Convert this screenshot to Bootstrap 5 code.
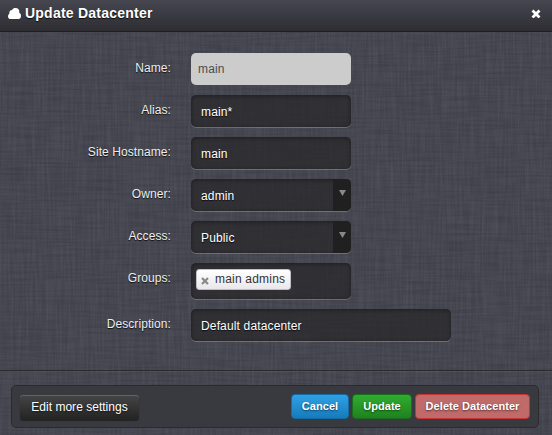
<!DOCTYPE html>
<html lang="en">
<head>
<meta charset="utf-8">
<title>Update Datacenter</title>
<link href="https://cdn.jsdelivr.net/npm/bootstrap@5.3.0/dist/css/bootstrap.min.css" rel="stylesheet">
<style>
body{width:552px;height:435px;overflow:hidden;font:12px/18px "Liberation Sans",Arial,sans-serif;letter-spacing:.15px;color:#eee;text-shadow:0 1px 1px rgba(0,0,0,.8);
background-color:#454650;
background-image:url("data:image/svg+xml,%3Csvg xmlns='http://www.w3.org/2000/svg' width='552' height='435'%3E%3Cfilter id='v' x='0' y='0' width='1' height='1'%3E%3CfeTurbulence type='fractalNoise' baseFrequency='.45 .025' numOctaves='2' seed='3'/%3E%3CfeColorMatrix values='0 0 0 0 1 0 0 0 0 1 0 0 0 0 1 .1 0 0 0 -.035'/%3E%3C/filter%3E%3Cfilter id='h' x='0' y='0' width='1' height='1'%3E%3CfeTurbulence type='fractalNoise' baseFrequency='.025 .45' numOctaves='2' seed='8'/%3E%3CfeColorMatrix values='0 0 0 0 0 0 0 0 0 0 0 0 0 0 0 .22 0 0 0 -.08'/%3E%3C/filter%3E%3Crect width='552' height='435' filter='url(%23v)'/%3E%3Crect width='552' height='435' filter='url(%23h)'/%3E%3C/svg%3E")}
.dlg-head{height:32px;padding:0 11px 5px 8px;background:linear-gradient(#464650,#2d2d32);border-bottom:1px solid #1f1f23}
.dlg-title{font-size:14px;font-weight:700;line-height:18px;color:#fff;letter-spacing:.23px}
.dlg-body{height:338px;padding-top:21px}
.rows{gap:10px}
.line{min-height:32px;gap:20px}
.line>label{width:171px;line-height:31px;text-align:right;letter-spacing:.08px}
.field{width:160px;height:32px;border-radius:5px;background:rgba(40,39,42,.72);box-shadow:inset 0 1px 4px rgba(0,0,0,.4),0 1px 0 rgba(255,255,255,.22);padding:1px 0 0 10px;color:#fff;overflow:hidden}
.field.off{background:#ccc;color:#4c4c4c;text-shadow:none;box-shadow:none;padding:0 0 1px 7px}
.field.wide{width:260px}
.field.tags{height:36px;padding:0 0 4px 5px}
.arrow{width:18px;height:32px;margin-top:-1px;background:#202021;padding:11px 0 0 6px}
.chip{height:21px;width:95px;padding:0 0 0 4px;border:1px solid #c2bec4;border-radius:3px;background:linear-gradient(#fff,#e9e7ea);color:#333;text-shadow:none;letter-spacing:.2px}
.chip svg{margin:4px 6px 0 0}
.dlg-foot{border-top:1px solid #2a2a2e;box-shadow:inset 0 1px 0 rgba(255,255,255,.05);height:65px;padding:14px 13px 0 11px}
.bar{height:43px;border:1px solid #2b2b2f;border-radius:5px;background:#393a3f;padding:0 8px 0 8px}
.bar .btn{font:700 11px/16px "Liberation Sans",Arial,sans-serif;height:25px;padding:0 0 2px;border-radius:4px;color:#fff;text-shadow:0 1px 2px rgba(0,0,0,.55);white-space:nowrap;letter-spacing:.05px}
.bar .b-edit{width:119px;font-weight:400;font-size:12px;padding:0;border:0;border-radius:3px;background:linear-gradient(#454545,#232323);box-shadow:inset 0 1px 0 #626262,0 1px 1px #222;margin-top:1px;letter-spacing:.02px}
.bar .b-cancel{width:58px;background:linear-gradient(#2fa1e5,#167bbb);border-color:#146ca5}
.bar .b-update{width:60px;background:linear-gradient(#2fad2f,#1f821f);border-color:#1b6d1e}
.bar .b-delete{width:115px;background:#c06a6a;border-color:#c43535}
.acts{gap:3px}
</style>
</head>
<body>
<header class="dlg-head d-flex align-items-center justify-content-between">
  <div class="d-flex align-items-center">
    <svg width="13" height="11" viewBox="0 0 13 11" fill="#fff"><path d="M2.500 11C1 11 0 9.800 0 8.400C0 7 .8 6 1.400 5.400C1 3.600 2.200 2 4.200 2C4.700.6 5.900 0 7.600 0C9.800 0 11.500 1.500 11.300 3.800L11.200 4.800C12.400 5.300 13 6.400 13 7.900C13 9.700 12 11 10.500 11Z"/></svg>
    <span class="dlg-title ms-1">Update Datacenter</span>
  </div>
  <svg width="10" height="10" viewBox="0 0 10 10" class="mt-1 mb-1" stroke="#fff" stroke-width="2.800"><path d="M1.500 2.500L8.500 9.500M8.500 2.500L1.500 9.500"/></svg>
</header>
<main class="dlg-body d-flex flex-column">
  <div class="rows d-flex flex-column">
    <div class="line d-flex"><label>Name:</label><div class="field off d-flex align-items-center">main</div></div>
    <div class="line d-flex"><label>Alias:</label><div class="field d-flex align-items-center">main*</div></div>
    <div class="line d-flex"><label>Site Hostname:</label><div class="field d-flex align-items-center">main</div></div>
    <div class="line d-flex"><label>Owner:</label><div class="field d-flex align-items-center justify-content-between">admin<span class="arrow d-flex align-items-start"><svg width="7" height="6" viewBox="0 0 7 6"><path d="M0 0H7L3.500 6Z" fill="#888"/></svg></span></div></div>
    <div class="line d-flex"><label>Access:</label><div class="field d-flex align-items-center justify-content-between">Public<span class="arrow d-flex align-items-start"><svg width="7" height="6" viewBox="0 0 7 6"><path d="M0 0H7L3.500 6Z" fill="#888"/></svg></span></div></div>
    <div class="line d-flex"><label>Groups:</label><div class="field tags d-flex align-items-center"><span class="chip d-flex align-items-center"><svg width="8" height="8" viewBox="0 0 8 8" stroke="#888" stroke-width="2.200"><path d="M1 1L7 7M7 1L1 7"/></svg>main admins</span></div></div>
    <div class="line d-flex"><label>Description:</label><div class="field wide d-flex align-items-center">Default datacenter</div></div>
  </div>
</main>
<footer class="dlg-foot">
  <div class="bar d-flex align-items-center">
    <button class="btn b-edit me-auto">Edit more settings</button>
    <div class="acts d-flex">
      <button class="btn b-cancel">Cancel</button>
      <button class="btn b-update">Update</button>
      <button class="btn b-delete">Delete Datacenter</button>
    </div>
  </div>
</footer>
<script src="https://cdn.jsdelivr.net/npm/bootstrap@5.3.0/dist/js/bootstrap.bundle.min.js"></script>
</body>
</html>
